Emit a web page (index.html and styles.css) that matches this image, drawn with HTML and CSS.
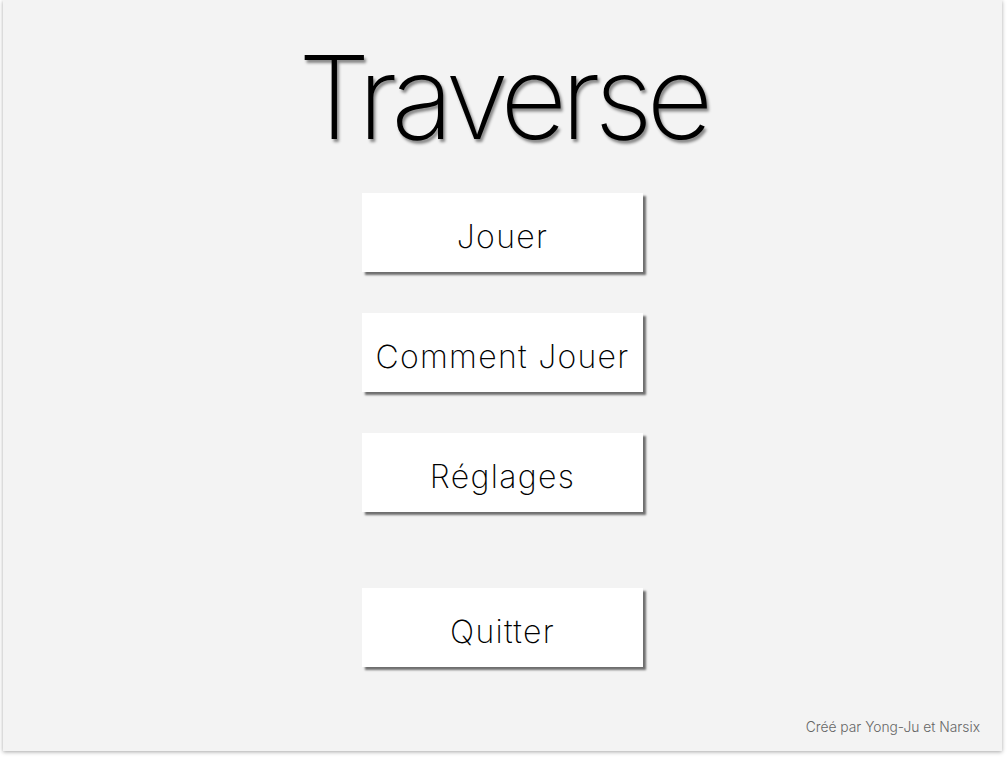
FILE: index.html
```html
<!DOCTYPE html>
<html lang="fr">
<head>
<meta charset="utf-8">
<title>Traverse</title>
<link rel="stylesheet" href="styles.css">
</head>
<body>
<div class="panel">
  <h1 class="title">Traverse</h1>
  <div class="menu">
    <button class="btn">Jouer</button>
    <button class="btn">Comment Jouer</button>
    <button class="btn">Réglages</button>
    <button class="btn btn-quit">Quitter</button>
  </div>
  <div class="credits">Créé par Yong-Ju et Narsix</div>
</div>
</body>
</html>
```
FILE: styles.css
```css
html, body {
  margin: 0;
  padding: 0;
  background: #ffffff;
}
body {
  width: 1008px;
  height: 758px;
  overflow: hidden;
  font-family: "Inter", "Roboto", "Liberation Sans", sans-serif;
}
.panel {
  margin-left: 3px;
  width: 999px;
  height: 751px;
  background: #f3f3f3;
  box-shadow: 0 1px 4px rgba(0,0,0,0.35);
  display: flex;
  flex-direction: column;
  align-items: center;
  box-sizing: border-box;
  padding-top: 34px;
}
.title {
  margin: 0;
  font-size: 116px;
  font-weight: 200;
  line-height: 126px;
  color: #000;
  letter-spacing: -6.3px;
  text-shadow: 2px 3px 3px rgba(0,0,0,0.45);
}
.menu {
  margin-top: 33px;
  display: flex;
  flex-direction: column;
  align-items: center;
  gap: 41px;
}
.btn {
  width: 281px;
  height: 79px;
  border: none;
  background: #ffffff;
  box-shadow: 3px 3px 2px rgba(0,0,0,0.55);
  font-family: inherit;
  font-size: 32px;
  font-weight: 200;
  color: #000;
  padding: 8px 0 0 0;
  letter-spacing: 1.3px;
}
.btn-quit {
  margin-top: 35px;
}
.credits {
  align-self: flex-end;
  margin-top: auto;
  margin-bottom: 16px;
  margin-right: 22px;
  font-size: 13.8px;
  font-weight: 300;
  color: #666;
}
```
